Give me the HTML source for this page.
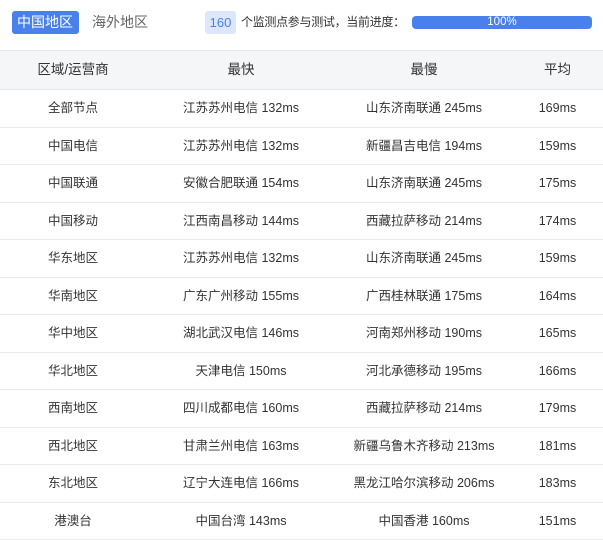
<!DOCTYPE html>
<html><head><meta charset="utf-8"><style>
*{margin:0;padding:0;box-sizing:border-box}
body{width:603px;height:540px;overflow:hidden;background:#fff;font-family:"Liberation Sans","Noto Sans CJK SC",sans-serif;color:#333;font-size:12.5px;position:relative}
.tab{position:absolute;top:11px;height:23px;line-height:23px;font-size:14px;padding:0 5px;border-radius:3px}
.t1{left:12px;width:67px;background:#4a80ec;color:#fff}
.t2{left:87px;color:#666}
.badge{position:absolute;left:205px;top:11px;width:31px;height:23px;line-height:23px;text-align:center;background:#dce7fb;color:#4a80ec;border-radius:3px;font-size:13px}
.info{position:absolute;left:241px;top:11px;line-height:23px;font-size:12px;letter-spacing:-0.3px;color:#333;white-space:nowrap}
.bar{position:absolute;left:412px;top:16px;width:180px;height:13px;border-radius:4px;background:#4a80ec;color:#fff;font-size:11.5px;line-height:13px;text-align:center}
.tbl{position:absolute;top:50px;left:0;width:603px}
.r{display:flex;height:37.5px;border-bottom:1px solid #ebebeb}
.r div{height:36.5px;line-height:36.5px;text-align:center;white-space:nowrap}
.h{height:40px;background:#f5f6f8;border-top:1px solid #e8e8e8;border-bottom:1px solid #e8e8e8;font-size:13.5px}
.h div{height:38px;line-height:38px}
.c1{width:146px}.c2{width:190px}.c3{width:176px}.c4{width:91px}
</style></head><body>
<div class="tab t1">中国地区</div><div class="tab t2">海外地区</div>
<div class="badge">160</div><div class="info">个监测点参与测试，当前进度：</div>
<div class="bar">100%</div>
<div class="tbl">
<div class="r h"><div class="c1">区域/运营商</div><div class="c2">最快</div><div class="c3">最慢</div><div class="c4">平均</div></div>
<div class="r"><div class="c1">全部节点</div><div class="c2">江苏苏州电信 132ms</div><div class="c3">山东济南联通 245ms</div><div class="c4">169ms</div></div>
<div class="r"><div class="c1">中国电信</div><div class="c2">江苏苏州电信 132ms</div><div class="c3">新疆昌吉电信 194ms</div><div class="c4">159ms</div></div>
<div class="r"><div class="c1">中国联通</div><div class="c2">安徽合肥联通 154ms</div><div class="c3">山东济南联通 245ms</div><div class="c4">175ms</div></div>
<div class="r"><div class="c1">中国移动</div><div class="c2">江西南昌移动 144ms</div><div class="c3">西藏拉萨移动 214ms</div><div class="c4">174ms</div></div>
<div class="r"><div class="c1">华东地区</div><div class="c2">江苏苏州电信 132ms</div><div class="c3">山东济南联通 245ms</div><div class="c4">159ms</div></div>
<div class="r"><div class="c1">华南地区</div><div class="c2">广东广州移动 155ms</div><div class="c3">广西桂林联通 175ms</div><div class="c4">164ms</div></div>
<div class="r"><div class="c1">华中地区</div><div class="c2">湖北武汉电信 146ms</div><div class="c3">河南郑州移动 190ms</div><div class="c4">165ms</div></div>
<div class="r"><div class="c1">华北地区</div><div class="c2">天津电信 150ms</div><div class="c3">河北承德移动 195ms</div><div class="c4">166ms</div></div>
<div class="r"><div class="c1">西南地区</div><div class="c2">四川成都电信 160ms</div><div class="c3">西藏拉萨移动 214ms</div><div class="c4">179ms</div></div>
<div class="r"><div class="c1">西北地区</div><div class="c2">甘肃兰州电信 163ms</div><div class="c3">新疆乌鲁木齐移动 213ms</div><div class="c4">181ms</div></div>
<div class="r"><div class="c1">东北地区</div><div class="c2">辽宁大连电信 166ms</div><div class="c3">黑龙江哈尔滨移动 206ms</div><div class="c4">183ms</div></div>
<div class="r"><div class="c1">港澳台</div><div class="c2">中国台湾 143ms</div><div class="c3">中国香港 160ms</div><div class="c4">151ms</div></div>
</div>
</body></html>
